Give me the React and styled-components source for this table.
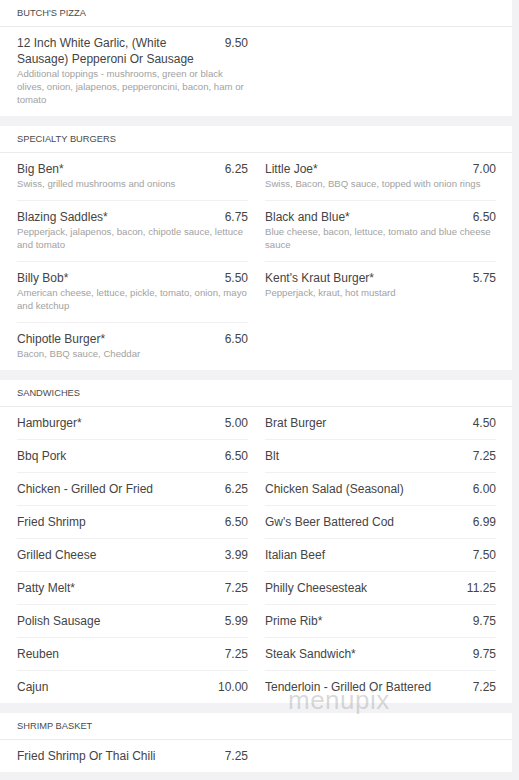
import React from 'react';
import styled, { createGlobalStyle } from 'styled-components';

const GlobalStyle = createGlobalStyle`
  html, body {
    margin: 0;
    padding: 0;
    background: #f2f2f5;
    font-family: "Liberation Sans", Arial, sans-serif;
  }
`;

const Page = styled.div`
  position: relative;
  width: 512px;
  display: flex;
  flex-direction: column;
  gap: 10px;
  padding-bottom: 10px;
`;

const Card = styled.section`
  background: #fff;
`;

const CardHeader = styled.div`
  height: 26px;
  line-height: 26px;
  padding: 0 17px;
  font-size: 9.3px;
  color: #4a4a4a;
  text-transform: uppercase;
  border-bottom: 1px solid #ebebee;
`;

const Grid = styled.div`
  display: grid;
  grid-template-columns: 1fr 1fr;
  column-gap: 17px;
  padding: 0 16px 0 17px;
`;

const Item = styled.div`
  padding: 8px 0 8px;
  border-bottom: ${p => (p.$last ? 'none' : '1px solid #f0f0f2')};
`;

const Top = styled.div`
  display: flex;
  justify-content: space-between;
  gap: 12px;
  font-size: 12px;
  line-height: 16px;
  color: #444;
`;

const Name = styled.div`
  flex: 1;
`;

const Price = styled.div`
  flex: none;
`;

const Desc = styled.div`
  font-size: 9.6px;
  line-height: 13px;
  color: #a2a2a2;
  margin-bottom: 2px;
`;

const Watermark = styled.div`
  position: absolute;
  left: 288px;
  top: 690px;
  font-size: 26px;
  line-height: 20px;
  letter-spacing: 0.5px;
  color: rgba(170, 170, 170, 0.45);
  pointer-events: none;
`;

const menu = [
  {
    title: "Butch's Pizza",
    items: [
      {
        name: '12 Inch White Garlic, (White Sausage) Pepperoni Or Sausage',
        price: '9.50',
        desc: 'Additional toppings - mushrooms, green or black olives, onion, jalapenos, pepperoncini, bacon, ham or tomato',
        last: true,
      },
    ],
  },
  {
    title: 'Specialty Burgers',
    items: [
      { name: 'Big Ben*', price: '6.25', desc: 'Swiss, grilled mushrooms and onions' },
      { name: 'Little Joe*', price: '7.00', desc: 'Swiss, Bacon, BBQ sauce, topped with onion rings' },
      { name: 'Blazing Saddles*', price: '6.75', desc: 'Pepperjack, jalapenos, bacon, chipotle sauce, lettuce and tomato' },
      { name: 'Black and Blue*', price: '6.50', desc: 'Blue cheese, bacon, lettuce, tomato and blue cheese sauce' },
      { name: 'Billy Bob*', price: '5.50', desc: 'American cheese, lettuce, pickle, tomato, onion, mayo and ketchup' },
      { name: "Kent's Kraut Burger*", price: '5.75', desc: 'Pepperjack, kraut, hot mustard', last: true },
      { name: 'Chipotle Burger*', price: '6.50', desc: 'Bacon, BBQ sauce, Cheddar', last: true },
    ],
  },
  {
    title: 'Sandwiches',
    items: [
      { name: 'Hamburger*', price: '5.00' },
      { name: 'Brat Burger', price: '4.50' },
      { name: 'Bbq Pork', price: '6.50' },
      { name: 'Blt', price: '7.25' },
      { name: 'Chicken - Grilled Or Fried', price: '6.25' },
      { name: 'Chicken Salad (Seasonal)', price: '6.00' },
      { name: 'Fried Shrimp', price: '6.50' },
      { name: "Gw's Beer Battered Cod", price: '6.99' },
      { name: 'Grilled Cheese', price: '3.99' },
      { name: 'Italian Beef', price: '7.50' },
      { name: 'Patty Melt*', price: '7.25' },
      { name: 'Philly Cheesesteak', price: '11.25' },
      { name: 'Polish Sausage', price: '5.99' },
      { name: 'Prime Rib*', price: '9.75' },
      { name: 'Reuben', price: '7.25' },
      { name: 'Steak Sandwich*', price: '9.75' },
      { name: 'Cajun', price: '10.00', last: true },
      { name: 'Tenderloin - Grilled Or Battered', price: '7.25', last: true },
    ],
  },
  {
    title: 'Shrimp Basket',
    items: [{ name: 'Fried Shrimp Or Thai Chili', price: '7.25', last: true }],
  },
];

const App = () => (
  <>
    <GlobalStyle />
    <Page>
      {menu.map(section => (
        <Card key={section.title}>
          <CardHeader>{section.title}</CardHeader>
          <Grid>
            {section.items.map(item => (
              <Item key={item.name} $last={item.last}>
                <Top>
                  <Name>{item.name}</Name>
                  <Price>{item.price}</Price>
                </Top>
                {item.desc && <Desc>{item.desc}</Desc>}
              </Item>
            ))}
          </Grid>
        </Card>
      ))}
      <Watermark>menupix</Watermark>
    </Page>
  </>
);

export default App;
